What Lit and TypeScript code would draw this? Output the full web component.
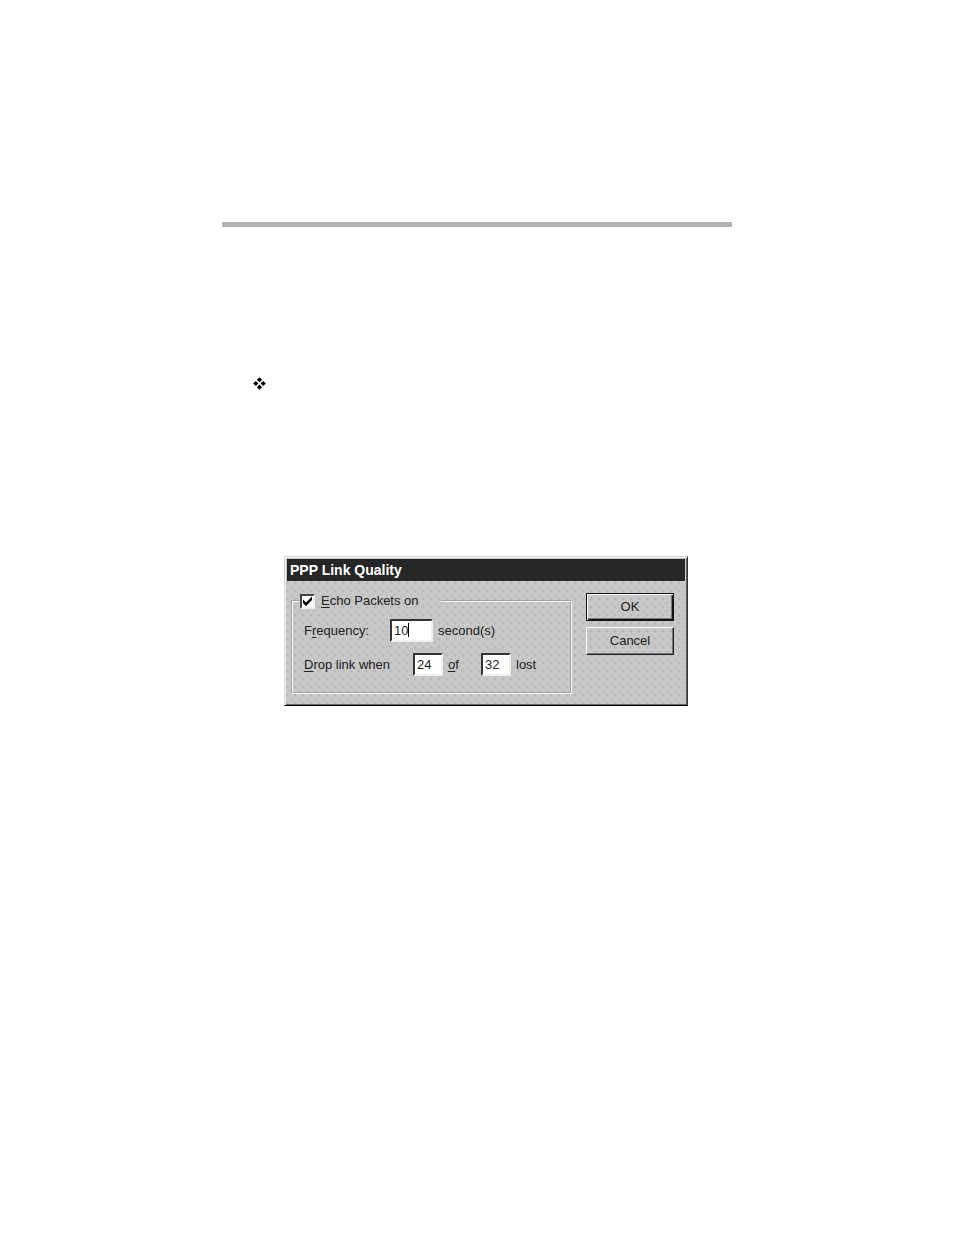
import { LitElement, html, css } from "lit";
import { customElement, state } from "lit/decorators.js";

@customElement("app-root")
export class AppRoot extends LitElement {
  static styles = css`
    :host {
      display: block;
      min-height: 100vh;
      background: #fff;
      color: #222;
      font: 13px/16px "Liberation Sans", Arial, sans-serif;
    }
    * {
      box-sizing: border-box;
    }
    u {
      text-underline-offset: 2px;
    }
    .page {
      width: 100%;
      max-width: 510px;
      margin: 0 auto;
      padding-top: 222px;
    }
    .rule {
      margin: 0;
      border: 0;
      border-top: 5px solid #b3b3b3;
    }
    .bullet {
      display: block;
      width: 13px;
      height: 13px;
      margin: 150px 0 0 31px;
    }
    .dialog {
      margin: 166px 44px 0 62px;
      border: 1px solid;
      border-color: #d4d4d4 #333 #000 #d4d4d4;
      box-shadow: inset 1px 1px #f4f4f4, inset -1px -1px #666;
      padding: 2px;
      background-color: #c8c8c8;
      background-image: radial-gradient(circle at 2px 2px, #bababa 1px, transparent 2px),
        radial-gradient(circle at 6px 6px, #c0c0c0 1px, transparent 2px);
      background-size: 8px 8px;
    }
    .title {
      margin: 0;
      padding: 0 3px;
      background: #262626;
      color: #fff;
      font-size: 14px;
      font-weight: bold;
      line-height: 22px;
    }
    .body {
      display: flex;
      align-items: flex-start;
      gap: 14px;
      padding: 12px 11px 9px 4px;
    }
    .group {
      flex: 1;
      min-width: 0;
      margin: 0;
      padding: 10px 10px 16px 11px;
      border: 2px groove #f8f8f8;
    }
    .legend {
      display: flex;
      align-items: center;
      gap: 6px;
      margin-left: -4px;
      padding: 0 22px 0 0;
    }
    .check {
      display: grid;
      width: 15px;
      height: 15px;
    }
    .check input {
      grid-area: 1 / 1;
      appearance: none;
      width: 15px;
      height: 15px;
      margin: 0;
      border: 2px solid;
      border-color: #444 #eee #eee #444;
      background: #fff;
    }
    .check svg {
      grid-area: 1 / 1;
      width: 15px;
      height: 15px;
      pointer-events: none;
      visibility: hidden;
    }
    .check input:checked + svg {
      visibility: visible;
    }
    .row {
      display: flex;
      align-items: center;
      height: 23px;
      margin-bottom: 11px;
    }
    .row:last-child {
      margin-bottom: 0;
    }
    .name {
      width: 86px;
    }
    .name.wide {
      width: 109px;
    }
    .field {
      width: 30px;
      height: 23px;
      padding: 0 2px;
      border: 2px solid;
      border-color: #333 #eee #eee #333;
      border-radius: 0;
      background: #fff;
      color: #222;
      font: inherit;
      outline: none;
    }
    .field.long {
      width: 43px;
    }
    .entry {
      display: flex;
      position: relative;
    }
    .caret {
      position: absolute;
      top: 4px;
      left: 18px;
      width: 1px;
      height: 14px;
      background: #000;
    }
    .entry:focus-within .caret {
      display: none;
    }
    .after {
      margin-left: 5px;
    }
    .of {
      width: 33px;
    }
    .buttons {
      display: flex;
      flex-direction: column;
      gap: 6px;
      width: 88px;
    }
    .button {
      height: 28px;
      padding: 0;
      border: 1px solid;
      border-color: #fff #222 #222 #fff;
      border-radius: 0;
      box-shadow: inset -1px -1px #777;
      background: transparent;
      color: #222;
      font: inherit;
    }
    .button.default {
      border-color: #111;
      box-shadow: inset 1px 1px #fff, inset -1px -1px #111, inset -2px -2px #777;
    }
  `;

  @state() private echo = true;

  render() {
    return html`
      <main class="page">
        <hr class="rule" />
        <svg class="bullet" viewBox="0 0 13 13" aria-hidden="true">
          <path d="M6.500 0.200l2.600 2.600-2.600 2.600-2.600-2.600zM2.800 3.900l2.600 2.600-2.600 2.600-2.600-2.600zM10.200 3.900l2.600 2.600-2.600 2.600-2.600-2.600zM6.500 7.600l2.600 2.600-2.600 2.600-2.600-2.600z" />
        </svg>
        <form class="dialog" role="dialog" aria-labelledby="title" @submit=${(e: Event) => e.preventDefault()}>
          <h1 class="title" id="title">PPP Link Quality</h1>
          <div class="body">
            <fieldset class="group">
              <legend class="legend">
                <span class="check">
                  <input
                    id="echo"
                    type="checkbox"
                    .checked=${this.echo}
                    @change=${(e: Event) => (this.echo = (e.target as HTMLInputElement).checked)}
                  />
                  <svg viewBox="0 0 15 15" aria-hidden="true">
                    <path d="M3 5.500v3.500l3 3 6-6v-3.500l-6 6z" fill="#000" />
                  </svg>
                </span>
                <label for="echo"><u>E</u>cho Packets on</label>
              </legend>
              <div class="row">
                <label class="name" for="frequency">F<u>r</u>equency:</label>
                <span class="entry">
                  <input class="field long" id="frequency" value="10" />
                  <span class="caret"></span>
                </span>
                <span class="after">second(s)</span>
              </div>
              <div class="row">
                <label class="name wide" for="lost"><u>D</u>rop link when</label>
                <input class="field" id="lost" value="24" />
                <label class="after of" for="total"><u>o</u>f</label>
                <input class="field" id="total" value="32" />
                <span class="after">lost</span>
              </div>
            </fieldset>
            <div class="buttons">
              <button class="button default" type="submit">OK</button>
              <button class="button" type="button">Cancel</button>
            </div>
          </div>
        </form>
      </main>
    `;
  }
}
